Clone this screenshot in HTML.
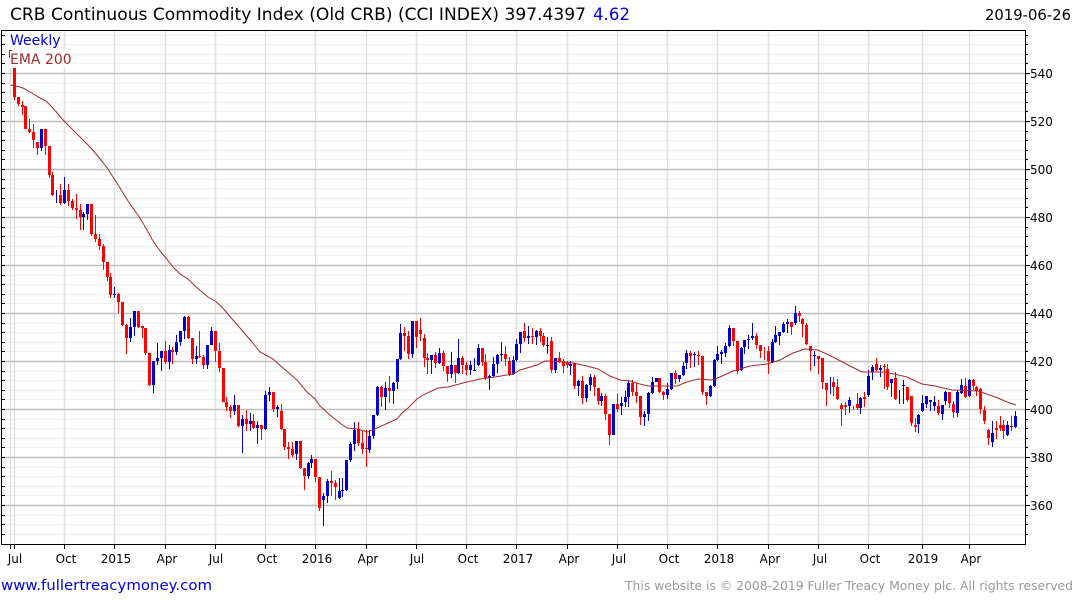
<!DOCTYPE html>
<html lang="en">
<head>
<meta charset="utf-8">
<title>CRB Continuous Commodity Index</title>
<style>
html,body{margin:0;padding:0;background:#fff;width:1075px;height:600px;overflow:hidden}
svg{display:block}
text{font-family:"DejaVu Sans","Liberation Sans",sans-serif}
.ax{font-size:12px;fill:#000}
.xl{font-size:12px;fill:#000;text-anchor:middle}
</style>
</head>
<body>
<svg width="1075" height="600" viewBox="0 0 1075 600" xmlns="http://www.w3.org/2000/svg">
<rect width="1075" height="600" fill="#fff"/>
<text x="10" y="20" font-size="16.6" fill="#000" textLength="576" lengthAdjust="spacingAndGlyphs">CRB Continuous Commodity Index (Old CRB) (CCI INDEX) 397.4397</text>
<text x="593" y="20" font-size="16.6" fill="#0000dd">4.62</text>
<text x="1071" y="20" font-size="14.8" fill="#000" text-anchor="end">2019-06-26</text>

<g fill="none">
<path stroke="#f0f0f0" stroke-width="1.3" d="M2 35.5H1025M2 44.5H1025M2 54.5H1025M2 63.5H1025M2 83.5H1025M2 92.5H1025M2 102.5H1025M2 111.5H1025M2 131.5H1025M2 140.5H1025M2 150.5H1025M2 159.5H1025M2 179.5H1025M2 188.5H1025M2 198.5H1025M2 207.5H1025M2 227.5H1025M2 236.5H1025M2 246.5H1025M2 255.5H1025M2 275.5H1025M2 284.5H1025M2 294.5H1025M2 303.5H1025M2 323.5H1025M2 332.5H1025M2 342.5H1025M2 351.5H1025M2 371.5H1025M2 380.5H1025M2 390.5H1025M2 399.5H1025M2 419.5H1025M2 428.5H1025M2 438.5H1025M2 447.5H1025M2 467.5H1025M2 476.5H1025M2 486.5H1025M2 495.5H1025M2 515.5H1025M2 524.5H1025M2 534.5H1025"/>
<path stroke="#dedede" stroke-width="1.4" d="M10.5 31V544M14.5 31V544M64.5 31V544M114.5 31V544M165.5 31V544M215.5 31V544M265.5 31V544M315.5 31V544M366.5 31V544M416.5 31V544M466.5 31V544M516.5 31V544M567.5 31V544M617.5 31V544M667.5 31V544M717.5 31V544M768.5 31V544M818.5 31V544M868.5 31V544M922.5 31V544M969.5 31V544"/>
<path stroke="#c0c0c0" stroke-width="1.4" d="M2 73.5H1025M2 121.5H1025M2 169.5H1025M2 217.5H1025M2 265.5H1025M2 313.5H1025M2 361.5H1025M2 409.5H1025M2 457.5H1025M2 505.5H1025"/>
</g>
<g shape-rendering="crispEdges" fill="none">
<!-- red wicks -->
<path stroke="#ff0000" stroke-width="1" d="M14.5 68V100M18.5 97V106M22.5 101V115M25.5 106V129M29.5 119V133M33.5 124V148M37.5 142V155M45.5 129V155M49.5 146V178M52.5 172V196M60.5 184V205M68.5 184V206M72.5 199V210M76.5 194V219M80.5 204V230M91.5 204V236M95.5 215V242M99.5 234V250M103.5 244V270M107.5 262V281M110.5 273V298M118.5 293V313M122.5 302V326M126.5 324V354M138.5 311V328M142.5 326V338M145.5 328V355M149.5 353V386M165.5 341V364M172.5 347V364M188.5 316V339M192.5 338V364M199.5 331V358M203.5 355V369M215.5 331V362M219.5 343V372M223.5 368V402M226.5 397V411M230.5 405V418M238.5 405V427M246.5 410V431M253.5 414V429M261.5 425V440M273.5 392V412M281.5 404V430M284.5 429V450M288.5 442V459M292.5 442V457M300.5 441V469M304.5 468V490M315.5 459V482M319.5 477V511M331.5 471V496M335.5 480V500M358.5 422V446M362.5 431V454M366.5 430V467M381.5 386V407M389.5 376V403M404.5 327V351M408.5 331V359M416.5 321V348M420.5 318V341M424.5 334V367M427.5 353V374M435.5 352V368M443.5 351V371M447.5 366V382M455.5 365V383M462.5 356V374M466.5 362V375M482.5 348V366M485.5 354V380M505.5 346V366M509.5 357V376M524.5 323V342M532.5 328V344M540.5 328V342M543.5 333V347M551.5 337V373M559.5 352V363M563.5 359V373M567.5 361V368M574.5 363V389M582.5 376V404M594.5 375V396M598.5 388V405M605.5 394V420M609.5 414V445M617.5 394V412M632.5 380V396M636.5 383V403M640.5 396V425M659.5 378V393M663.5 391V400M675.5 370V384M690.5 351V368M698.5 351V365M702.5 356V395M706.5 392V405M733.5 328V346M737.5 341V374M756.5 333V349M760.5 345V358M764.5 347V360M768.5 346V374M791.5 322V335M799.5 311V322M802.5 318V337M806.5 323V345M810.5 346V371M818.5 356V374M822.5 358V389M826.5 383V406M833.5 377V396M837.5 379V400M841.5 403V426M845.5 402V415M853.5 406V410M857.5 393V410M864.5 392V407M876.5 358V371M884.5 364V389M887.5 364V390M895.5 372V400M907.5 387V402M911.5 396V426M915.5 418V432M938.5 400V415M949.5 392V408M953.5 401V418M965.5 378V398M973.5 379V390M976.5 386V396M980.5 388V414M984.5 406V424M988.5 429V445M996.5 421V439M1000.5 416V431M1003.5 420V439M1011.5 416V431"/>
<!-- red bodies -->
<path stroke="#ff0000" stroke-width="3" d="M14.5 68V97M18.5 97V104M22.5 105V107M25.5 106V129M29.5 129V132M33.5 132V140M37.5 142V148M45.5 129V146M49.5 146V175M52.5 175V195M60.5 195V203M68.5 190V201M72.5 201V208M76.5 208V210M80.5 210V217M91.5 204V234M95.5 234V239M99.5 239V246M103.5 246V262M107.5 262V277M110.5 277V295M118.5 294V302M122.5 302V325M126.5 325V338M138.5 311V327M142.5 326V328M145.5 328V353M149.5 353V385M165.5 351V362M172.5 350V352M188.5 317V338M192.5 338V359M199.5 356V357M203.5 357V365M215.5 331V351M219.5 351V368M223.5 368V402M226.5 402V407M230.5 407V411M238.5 405V426M246.5 419V424M253.5 421V428M261.5 425V429M273.5 392V409M281.5 411V429M284.5 429V447M288.5 447V449M292.5 449V455M300.5 441V468M304.5 468V476M315.5 459V477M319.5 477V508M331.5 481V483M335.5 483V487M358.5 429V443M362.5 443V449M366.5 448V449M381.5 387V397M389.5 388V391M404.5 333V336M408.5 336V354M416.5 321V337M420.5 330V334M424.5 338V358M427.5 358V360M435.5 355V363M443.5 353V366M447.5 366V374M455.5 365V373M462.5 358V365M466.5 365V370M482.5 348V362M485.5 362V378M505.5 354V359M509.5 361V375M524.5 331V338M532.5 336V337M540.5 331V336M543.5 336V345M551.5 341V370M559.5 358V362M563.5 361V366M567.5 362V365M574.5 363V386M582.5 381V398M594.5 377V387M598.5 388V401M605.5 396V414M609.5 414V435M617.5 404V409M632.5 383V392M636.5 392V396M640.5 396V417M659.5 378V392M663.5 392V395M675.5 373V379M690.5 353V356M698.5 355V356M702.5 356V392M706.5 392V396M733.5 328V341M737.5 341V371M756.5 336V345M760.5 345V351M768.5 351V361M791.5 322V327M799.5 313V316M802.5 319V324M806.5 325V344M810.5 346V351M818.5 356V359M822.5 358V382M826.5 383V390M833.5 382V387M837.5 387V399M841.5 405V409M845.5 405V407M857.5 404V408M864.5 397V399M876.5 364V370M884.5 366V367M887.5 369V387M895.5 378V399M907.5 387V400M911.5 396V423M915.5 425V427M938.5 406V413M949.5 392V403M953.5 404V412M965.5 386V397M973.5 380V386M976.5 387V391M980.5 389V409M984.5 410V421M988.5 430V438M996.5 428V430M1000.5 425V428M1003.5 425V431M1011.5 426V427"/>
<!-- blue wicks -->
<path stroke="#0000cc" stroke-width="1" d="M41.5 129V151M56.5 190V203M64.5 177V204M83.5 212V230M87.5 204V220M114.5 287V298M130.5 318V342M134.5 311V336M153.5 361V393M157.5 343V365M161.5 351V371M169.5 345V369M176.5 335V355M180.5 331V346M184.5 316V339M196.5 346V364M207.5 345V369M211.5 327V345M234.5 395V415M242.5 415V453M250.5 413V431M257.5 421V444M265.5 391V430M269.5 387V401M277.5 405V417M296.5 441V460M308.5 462V479M311.5 455V468M323.5 493V526M327.5 479V503M339.5 478V499M342.5 478V497M346.5 460V491M350.5 442V462M354.5 422V451M369.5 430V453M373.5 415V439M377.5 386V416M385.5 382V410M393.5 382V404M397.5 359V389M400.5 324V360M412.5 321V358M431.5 355V374M439.5 348V364M451.5 352V378M458.5 339V374M470.5 361V375M474.5 358V371M478.5 344V366M489.5 375V390M493.5 357V377M497.5 354V373M501.5 342V361M513.5 356V375M516.5 339V361M520.5 332V353M528.5 326V344M536.5 330V345M547.5 337V354M555.5 358V373M570.5 361V375M578.5 380V396M586.5 384V402M590.5 374V391M601.5 393V406M613.5 404V435M621.5 397V415M625.5 391V407M628.5 380V407M644.5 411V426M648.5 392V421M652.5 377V394M656.5 378V382M667.5 383V399M671.5 373V390M679.5 375V382M683.5 362V376M686.5 350V369M694.5 352V367M710.5 385V397M714.5 359V387M717.5 346V361M721.5 350V364M725.5 343V357M729.5 325V347M741.5 347V371M744.5 340V354M748.5 335V349M752.5 323V340M772.5 339V363M775.5 326V343M779.5 332V345M783.5 322V333M787.5 319V333M795.5 306V325M814.5 351V366M830.5 377V394M849.5 397V413M860.5 397V414M868.5 370V397M872.5 365V380M880.5 365V377M891.5 379V397M899.5 390V404M903.5 380V404M918.5 414V433M922.5 395V412M926.5 396V408M930.5 400V411M934.5 396V411M942.5 405V420M945.5 391V405M957.5 390V417M961.5 379V394M969.5 379V397M992.5 421V447M1007.5 421V436M1015.5 411V428"/>
<!-- blue bodies -->
<path stroke="#0000cc" stroke-width="3" d="M41.5 129V148M64.5 190V203M83.5 214V217M87.5 204V214M114.5 294V295M130.5 327V338M134.5 311V327M153.5 361V385M157.5 358V361M161.5 351V358M169.5 350V362M176.5 342V352M180.5 331V342M184.5 317V331M196.5 356V359M207.5 345V365M211.5 331V345M234.5 405V411M242.5 419V426M250.5 421V424M257.5 425V428M265.5 395V429M269.5 392V395M277.5 407V409M296.5 441V454M308.5 463V476M311.5 459V463M323.5 496V500M327.5 481V496M339.5 491V498M342.5 490V491M346.5 460V490M350.5 444V460M354.5 430V444M369.5 436V450M373.5 415V436M377.5 387V415M385.5 388V397M393.5 383V391M397.5 359V382M400.5 333V359M412.5 321V354M431.5 355V360M439.5 353V363M451.5 365V374M458.5 358V373M470.5 365V370M474.5 370V371M478.5 348V365M489.5 376V378M493.5 364V376M497.5 355V364M501.5 354V355M513.5 360V374M516.5 344V360M520.5 332V344M528.5 336V338M536.5 331V337M547.5 345V346M555.5 358V370M570.5 364V366M578.5 381V386M586.5 385V398M590.5 377V385M601.5 396V401M613.5 404V435M621.5 403V406M625.5 397V402M628.5 383V397M644.5 414V417M648.5 393V414M652.5 382V393M656.5 378V382M667.5 389V395M671.5 373V389M679.5 375V379M683.5 366V375M686.5 353V363M694.5 354V355M710.5 386V396M714.5 360V386M717.5 354V360M721.5 352V354M725.5 346V353M729.5 328V346M741.5 348V370M744.5 340V347M748.5 339V340M752.5 336V338M772.5 342V362M775.5 335V342M779.5 332V336M783.5 324V332M787.5 322V324M795.5 313V323M814.5 355V356M849.5 400V406M860.5 398V408M868.5 376V395M872.5 367V372M880.5 368V370M891.5 379V383M903.5 385V386M918.5 415V424M922.5 403V411M926.5 396V404M930.5 400V402M934.5 402V406M942.5 405V414M945.5 392V401M957.5 392V413M961.5 385V393M969.5 380V396M992.5 433V442M1007.5 425V435M1015.5 416V427"/>
</g>

<polyline fill="none" stroke="#a52a2a" stroke-width="1" points="10.5,85 20,87 24,88.5 30,92 40,98 46,101 52,107 58,114 64,121 72,129 80,137 86,143 91,148 96,154 101,160 108,169 113,177 120,188 128,201 140,218 147,230 153,241 160,251 166,258 173,267 180,274 188,279 195,286 202,292 208,297 215,301 222,307 227,313 233,320 240,328 252,342 260,352 273,359 283,368 297,380 307,392 315,399 320,406 330,415 340,423 347,428 357,429 368,432 377,428 388,423 397,419 402,413 408,408 417,399 423,395 438,388 448,387 463,383 480,379 495,377 513,374 520,370 537,365 545,361 553,361 573,363 587,366 598,369 610,376 620,380 630,381 640,384 648,386 677,386 687,382 698,379 712,380 720,377 733,371 750,366 767,364 780,360 793,353 805,349 818,350 833,357 850,366 862,372 885,372 907,377 922,384 935,386 952,390 978,391 998,398 1007,402 1016,405"/>

<g shape-rendering="crispEdges">
<rect x="8" y="31" width="54" height="18" fill="#fff" fill-opacity=".9"/>
<rect x="9" y="50" width="64" height="18" fill="#fff" fill-opacity=".9"/>
<path d="M9.5 58V50.5H12" fill="none" stroke="#ff0000" stroke-width="1"/>
<path fill="none" stroke="#000" stroke-width="1" d="M1.5 544V30.5H1025.5V544M1 544.5H1026"/>
<path fill="none" stroke="#000" stroke-width="1" d="M2 35.5h3M2 44.5h3M2 54.5h3M2 63.5h3M2 73.5h3M2 83.5h3M2 92.5h3M2 102.5h3M2 111.5h3M2 121.5h3M2 131.5h3M2 140.5h3M2 150.5h3M2 159.5h3M2 169.5h3M2 179.5h3M2 188.5h3M2 198.5h3M2 207.5h3M2 217.5h3M2 227.5h3M2 236.5h3M2 246.5h3M2 255.5h3M2 265.5h3M2 275.5h3M2 284.5h3M2 294.5h3M2 303.5h3M2 313.5h3M2 323.5h3M2 332.5h3M2 342.5h3M2 351.5h3M2 361.5h3M2 371.5h3M2 380.5h3M2 390.5h3M2 399.5h3M2 409.5h3M2 419.5h3M2 428.5h3M2 438.5h3M2 447.5h3M2 457.5h3M2 467.5h3M2 476.5h3M2 486.5h3M2 495.5h3M2 505.5h3M2 515.5h3M2 524.5h3M2 534.5h3"/>
<path fill="none" stroke="#000" stroke-width="1" d="M1026 35.5h2M1026 44.5h2M1026 54.5h2M1026 63.5h2M1026 83.5h2M1026 92.5h2M1026 102.5h2M1026 111.5h2M1026 131.5h2M1026 140.5h2M1026 150.5h2M1026 159.5h2M1026 179.5h2M1026 188.5h2M1026 198.5h2M1026 207.5h2M1026 227.5h2M1026 236.5h2M1026 246.5h2M1026 255.5h2M1026 275.5h2M1026 284.5h2M1026 294.5h2M1026 303.5h2M1026 323.5h2M1026 332.5h2M1026 342.5h2M1026 351.5h2M1026 371.5h2M1026 380.5h2M1026 390.5h2M1026 399.5h2M1026 419.5h2M1026 428.5h2M1026 438.5h2M1026 447.5h2M1026 467.5h2M1026 476.5h2M1026 486.5h2M1026 495.5h2M1026 515.5h2M1026 524.5h2M1026 534.5h2M1026 73.5h4M1026 121.5h4M1026 169.5h4M1026 217.5h4M1026 265.5h4M1026 313.5h4M1026 361.5h4M1026 409.5h4M1026 457.5h4M1026 505.5h4"/>
<path fill="none" stroke="#000" stroke-width="1" d="M10.5 545v4M14.5 545v4M64.5 545v4M114.5 545v4M165.5 545v4M215.5 545v4M265.5 545v4M315.5 545v4M366.5 545v4M416.5 545v4M466.5 545v4M516.5 545v4M567.5 545v4M617.5 545v4M667.5 545v4M717.5 545v4M768.5 545v4M818.5 545v4M868.5 545v4M922.5 545v4M969.5 545v4"/>
</g>

<text x="10" y="45" font-size="14" fill="#0000dd">Weekly</text>
<text x="10" y="64" font-size="14" fill="#a52a2a">EMA 200</text>

<text class="ax" x="1030" y="78">540</text>
<text class="ax" x="1030" y="126">520</text>
<text class="ax" x="1030" y="174">500</text>
<text class="ax" x="1030" y="222">480</text>
<text class="ax" x="1030" y="270">460</text>
<text class="ax" x="1030" y="318">440</text>
<text class="ax" x="1030" y="366">420</text>
<text class="ax" x="1030" y="414">400</text>
<text class="ax" x="1030" y="462">380</text>
<text class="ax" x="1030" y="510">360</text>

<text class="xl" x="15" y="563">Jul</text>
<text class="xl" x="66" y="563">Oct</text>
<text class="xl" x="116" y="563">2015</text>
<text class="xl" x="167" y="563">Apr</text>
<text class="xl" x="216" y="563">Jul</text>
<text class="xl" x="267" y="563">Oct</text>
<text class="xl" x="317" y="563">2016</text>
<text class="xl" x="368" y="563">Apr</text>
<text class="xl" x="417" y="563">Jul</text>
<text class="xl" x="468" y="563">Oct</text>
<text class="xl" x="518" y="563">2017</text>
<text class="xl" x="569" y="563">Apr</text>
<text class="xl" x="619" y="563">Jul</text>
<text class="xl" x="669" y="563">Oct</text>
<text class="xl" x="719" y="563">2018</text>
<text class="xl" x="770" y="563">Apr</text>
<text class="xl" x="820" y="563">Jul</text>
<text class="xl" x="870" y="563">Oct</text>
<text class="xl" x="923" y="563">2019</text>
<text class="xl" x="971" y="563">Apr</text>

<text x="1" y="590" font-size="14.5" fill="#0000dd" textLength="211" lengthAdjust="spacingAndGlyphs">www.fullertreacymoney.com</text>
<text x="625" y="590" font-size="12.5" fill="#999" textLength="448" lengthAdjust="spacingAndGlyphs">This website is © 2008-2019 Fuller Treacy Money plc. All rights reserved</text>
</svg>
</body>
</html>
